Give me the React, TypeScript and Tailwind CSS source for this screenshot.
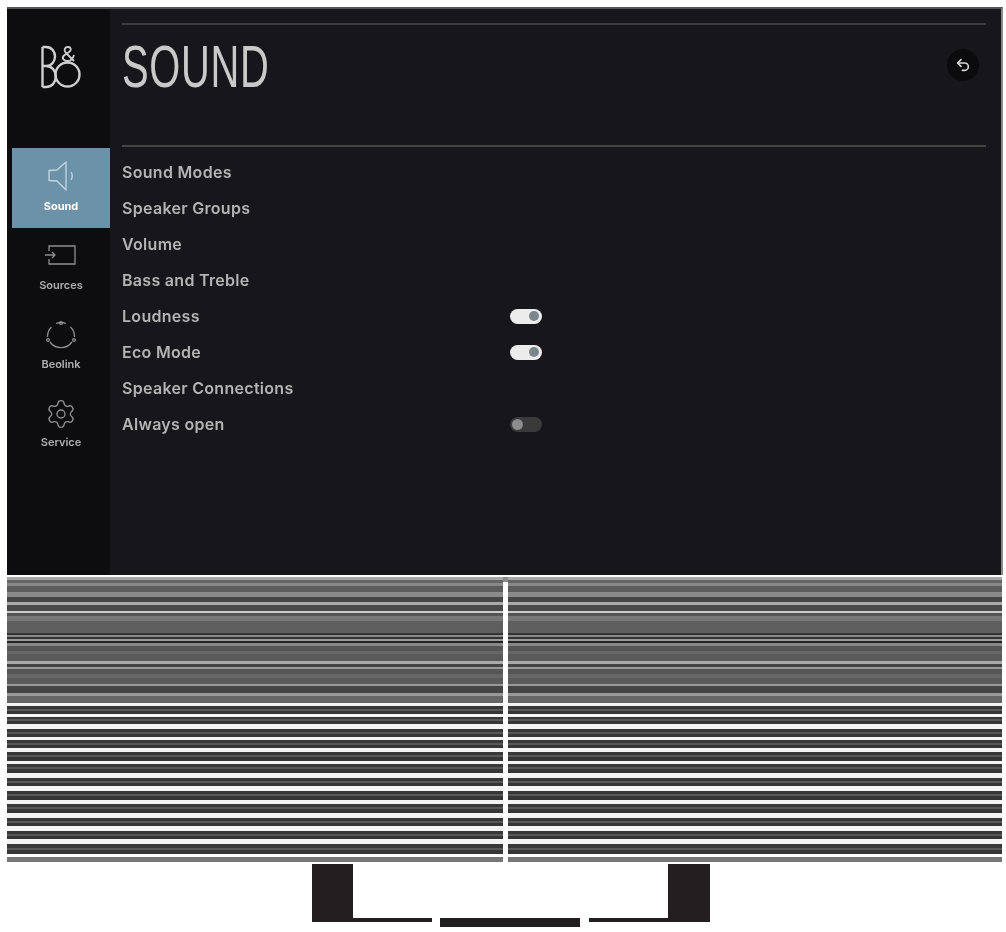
import React from "react";
import { Settings, Undo2 } from "lucide-react";

const grilleTop: [number, string][] = [
  [3, "#a8a8a8"], [3, "#666666"], [3, "#888888"], [6, "#5c5c5c"], [5, "#8a8a8a"], [5, "#464646"],
  [3, "#aaaaaa"], [6, "#4a4a4a"], [2, "#cccccc"], [3, "#555555"], [5, "#777777"], [12, "#5f5f5f"],
  [2, "#333333"], [2, "#888888"], [2, "#333333"], [2, "#999999"], [2, "#222222"], [3, "#888888"],
  [5, "#555555"], [3, "#666666"], [7, "#5a5a5a"], [3, "#aaaaaa"], [3, "#444444"], [2, "#999999"],
  [5, "#555555"], [4, "#666666"], [6, "#5a5a5a"], [2, "#999999"], [7, "#444444"], [3, "#999999"],
  [7, "#666666"],
];

// light slat + dark slat pairs in the lower half of the grille
const grilleBottom: [number, number][] = [
  [3, 8], [3, 7], [5, 8], [3, 8], [4, 9], [3, 9], [5, 8], [5, 9], [4, 9], [5, 8], [5, 8], [5, 10],
];

function Stripes({ className }: { className: string }) {
  return (
    <div className={`flex flex-col ${className}`}>
      {grilleTop.map(([h, color], idx) => (
        <div key={idx} style={{ height: h, backgroundColor: color }} />
      ))}
      {grilleBottom.map(([light, dark], idx) => (
        <div key={idx} className="flex flex-col">
          <div className="bg-[#f4f4f4]" style={{ height: light }} />
          <div className="bg-[#383838]" style={{ height: Math.floor(dark / 2) - 1 }} />
          <div className="h-[2px] bg-[#585858]" />
          <div className="bg-[#363636]" style={{ height: Math.ceil(dark / 2) - 1 }} />
        </div>
      ))}
      <div className="h-[3px] bg-white" />
      <div className="h-[5px] bg-[#777777]" />
    </div>
  );
}

function SpeakerIcon() {
  return (
    <svg width="30" height="34" viewBox="0 0 30 34" fill="none" stroke="currentColor" strokeWidth="1.3">
      <path d="M3 11.5 L3 21.5 L11 22 L20 31 L20 3 L11 11 Z" strokeLinejoin="round" />
      <path d="M25 13 Q27.5 17 25 21" />
    </svg>
  );
}

function SourcesIcon() {
  return (
    <svg width="32" height="20" viewBox="0 0 32 20" fill="none" stroke="currentColor" strokeWidth="1.3">
      <path d="M4 6 L4 1 L30 1 L30 19 L4 19 L4 14" />
      <path d="M0 10 L10 10 M7 7 L10 10 L7 13" />
    </svg>
  );
}

function BeolinkIcon() {
  return (
    <svg width="32" height="32" viewBox="0 0 32 32" fill="none" stroke="currentColor" strokeWidth="1.3">
      <path d="M11 3.5 A13.5 13.5 0 0 1 21 3.5" />
      <path d="M25.5 7 A13.5 13.5 0 0 1 29.5 17" />
      <path d="M27 22 A13.5 13.5 0 0 1 5 22" />
      <path d="M2.5 17 A13.5 13.5 0 0 1 6.5 7" />
      <circle cx="16" cy="3" r="1.4" />
      <circle cx="3" cy="20" r="1.4" />
      <circle cx="29" cy="20" r="1.4" />
    </svg>
  );
}

function Logo() {
  return (
    <svg width="42" height="44" viewBox="0 0 42 44" fill="none" stroke="#cfcfcf" strokeWidth="2.4">
      <path d="M1.5 2 L1.5 42 M1.5 2 L5 2 C17 2 17 21 5 21 L1.5 21 M5 21 C18 21 18 42 5 42 L1.5 42" />
      <circle cx="26.5" cy="29.5" r="12" />
      <path d="M33 16 L25 8 C22 5 24 2 27 2 C30 2 31 5 28 7 L23 10.5 C20 13.5 23 16 27 16 C30 16 32 13.5 33 10" strokeWidth="1.8" />
    </svg>
  );
}

const navItems = [
  { label: "Sources", icon: <SourcesIcon />, gap: "gap-[14px]", top: "pt-[17px]" },
  { label: "Beolink", icon: <BeolinkIcon />, gap: "gap-[6px]", top: "pt-[14px]" },
  { label: "Service", icon: <Settings size={32} strokeWidth={1} />, gap: "gap-[6px]", top: "pt-[14px]" },
];

const menuItems: { label: string; toggle?: boolean }[] = [
  { label: "Sound Modes" },
  { label: "Speaker Groups" },
  { label: "Volume" },
  { label: "Bass and Treble" },
  { label: "Loudness", toggle: true },
  { label: "Eco Mode", toggle: true },
  { label: "Speaker Connections" },
  { label: "Always open", toggle: false },
];

export default function App() {
  return (
    <div className="w-[1006px] h-[932px] bg-white pt-[7px] pl-[7px] overflow-hidden font-['Inter',sans-serif]">
      {/* TV screen */}
      <div className="w-[996px] h-[568px] flex bg-[#16161b] border-t-2 border-t-[#555555] border-r-2 border-r-[#8a8a8a] blur-[0.6px]">
        {/* Sidebar */}
        <div className="w-[103px] shrink-0 bg-[#0d0d10] flex flex-col">
          <div className="h-[139px] pl-[34px] pt-[36px] shrink-0">
            <Logo />
          </div>
          <div className="ml-[5px] h-[80px] bg-[#6c92aa] flex flex-col items-center justify-start pt-[11px] gap-[7px] text-[#c6d6e0]">
            <SpeakerIcon />
            <span className="text-[11px] leading-[12px] font-bold text-white">Sound</span>
          </div>
          {navItems.map((item) => (
            <div
              key={item.label}
              className={`h-[78px] ml-[5px] flex flex-col items-center text-[#8f8f8f] ${item.gap} ${item.top}`}
            >
              {item.icon}
              <span className="text-[11px] leading-[12px] font-semibold text-[#b0b0b0]">{item.label}</span>
            </div>
          ))}
        </div>

        {/* Content */}
        <div className="flex-1 flex flex-col pl-[12px] pr-[15px] pt-[14px]">
          <div className="h-[2px] bg-[#3d3d3d]" />
          <div className="h-[120px] flex items-start justify-between">
            <h1 className="mt-[8px] text-[60px] leading-[68px] text-[#c9c9c9] font-['Liberation_Sans',sans-serif] origin-left scale-x-[0.665] tracking-[1px]">
              SOUND
            </h1>
            <div className="mt-[24px] mr-[7px] w-[32px] h-[32px] rounded-full bg-[#0b0b0d] flex items-center justify-center text-[#d8d8d8]">
              <Undo2 size={16} strokeWidth={2.4} />
            </div>
          </div>
          <div className="h-[2px] bg-[#444444]" />
          <div className="pt-[7px] flex flex-col">
            {menuItems.map((item) => (
              <div key={item.label} className="h-[36px] flex items-center">
                <span className="w-[388px] text-[16px] font-semibold tracking-[0.3px] text-[#b4b4b4]">
                  {item.label}
                </span>
                {item.toggle === true && (
                  <div className="w-[32px] h-[15px] rounded-full bg-[#ececec] flex items-center justify-end pr-[3px]">
                    <div className="w-[10px] h-[10px] rounded-full bg-[#7b858c]" />
                  </div>
                )}
                {item.toggle === false && (
                  <div className="w-[32px] h-[15px] rounded-full bg-[#3a3a3a] flex items-center pl-[2px]">
                    <div className="w-[11px] h-[11px] rounded-full bg-[#8c8c8c]" />
                  </div>
                )}
              </div>
            ))}
          </div>
        </div>
      </div>

      {/* Speaker grille */}
      <div className="w-[995px] mt-[2px] flex blur-[0.5px]">
        <Stripes className="w-[496px] shrink-0" />
        <div className="w-[5px] shrink-0 flex flex-col bg-white">
          <div className="h-[5px] bg-[#8a8a8a]" />
        </div>
        <Stripes className="flex-1" />
      </div>

      {/* Stand */}
      <div className="w-[995px] mt-[2px] pl-[12px] flex justify-center blur-[0.4px]">
        <div className="w-[41px] h-[58px] bg-[#231f20]" />
        <div className="w-[79px] h-[4px] mt-[54px] bg-[#231f20]" />
        <div className="w-[140px] h-[9px] mt-[54px] ml-[8px] mr-[9px] bg-[#231f20]" />
        <div className="w-[79px] h-[4px] mt-[54px] bg-[#231f20]" />
        <div className="w-[42px] h-[58px] bg-[#231f20]" />
      </div>
    </div>
  );
}
